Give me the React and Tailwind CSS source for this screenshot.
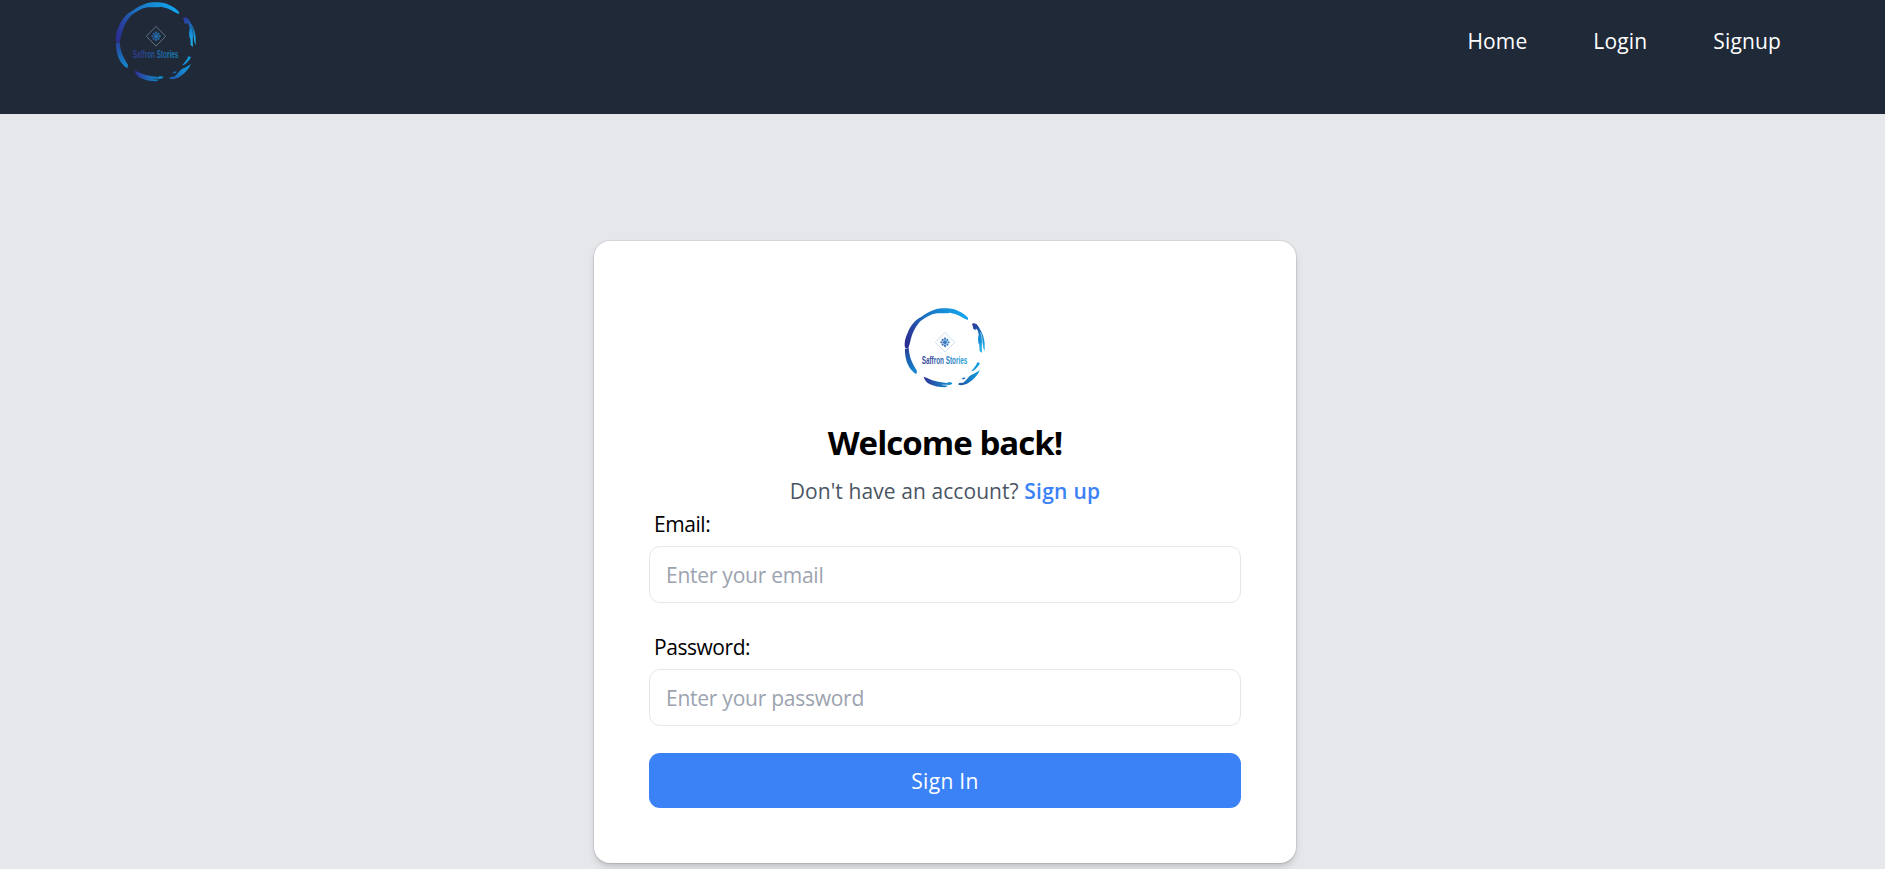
import React from "react";

function Logo({ id, dark }) {
  const g = (n) => `url(#${id}-${n})`;
  return (
    <svg viewBox="45 32 270 255" className="block h-[85px] w-[90px] shrink-0" role="img" aria-label="Saffron Stories">
      <defs>
        <linearGradient id={`${id}-top`} gradientUnits="userSpaceOnUse" x1="62" y1="150" x2="235" y2="60">
          <stop offset="0" stopColor="#2d2c91" />
          <stop offset="0.22" stopColor="#2745a0" />
          <stop offset="0.45" stopColor="#1c6fbd" />
          <stop offset="1" stopColor="#12a2ea" />
        </linearGradient>
        <linearGradient id={`${id}-left`} gradientUnits="userSpaceOnUse" x1="64" y1="158" x2="92" y2="236">
          <stop offset="0" stopColor="#264096" />
          <stop offset="0.5" stopColor="#1b67b5" />
          <stop offset="1" stopColor="#168bd2" />
        </linearGradient>
        <linearGradient id={`${id}-bottom`} gradientUnits="userSpaceOnUse" x1="116" y1="0" x2="200" y2="0">
          <stop offset="0" stopColor="#303099" />
          <stop offset="0.5" stopColor="#1f68b5" />
          <stop offset="1" stopColor="#1191d2" />
        </linearGradient>
        <linearGradient id={`${id}-lower`} gradientUnits="userSpaceOnUse" x1="221" y1="266" x2="285" y2="203">
          <stop offset="0" stopColor="#2357aa" />
          <stop offset="0.5" stopColor="#1489d0" />
          <stop offset="1" stopColor="#12a0dd" />
        </linearGradient>
        <linearGradient id={`${id}-right`} gradientUnits="userSpaceOnUse" x1="262" y1="82" x2="298" y2="165">
          <stop offset="0" stopColor="#2d359b" />
          <stop offset="0.25" stopColor="#2450a8" />
          <stop offset="0.5" stopColor="#1385ce" />
          <stop offset="1" stopColor="#20b0ea" />
        </linearGradient>
        <linearGradient id={`${id}-mark`} gradientUnits="userSpaceOnUse" x1="165" y1="0" x2="195" y2="0">
          <stop offset="0" stopColor="#2c5aa6" />
          <stop offset="1" stopColor="#2585c8" />
        </linearGradient>
      </defs>
      <path fill={g("top")} d="M60 157C57 145 60 127 68 112C77 90 91 74 107 66C121 55 137 47 152 42C165 38 183 39 200 40C221 44 237 55 249 67L249 74C238 71 229 64 218 59C211 55 202 55 195 52C185 56 166 52 148 55C132 59 112 71 102 82C88 98 81 117 77 133C75 144 72 152 70 159Z" />
      <path fill={g("left")} d="M60 160L71 158C72 174 76 190 83 204C87 213 92 220 96 227L94 237C84 231 73 219 68 206C63 194 59 174 60 160Z" />
      <path fill={g("bottom")} d="M116 244C127 248 139 254 151 257C163 261 176 261 189 264L189 268C180 269 174 268 168 269L189 271L181 276C163 276 145 272 133 266C125 261 118 254 116 244Z" />
      <path fill={g("bottom")} d="M187 261L199 261L202 266L190 270Z" />
      <path fill={g("lower")} d="M220 268L222 263L234 262C244 256 248 248 254 242C262 237 268 235 274 231C279 228 282 226 285 223C279 239 264 254 250 263C239 269 229 271 220 268ZM229 251C233 247 239 245 241 247C240 252 234 253 229 251ZM259 227C267 219 273 211 277 201L285 203C283 210 277 214 274 219C269 224 264 229 259 227Z" />
      <path fill={g("right")} d="M261 86C265 81 270 86 275 86C276 91 282 93 284 100C292 112 298 128 299 144L299 168L295 158L293 140L290 157L291 172L284 168L283 149L280 142L279 130L281 118L279 108C276 105 277 98 272 103C267 104 262 99 264 94Z" />
      <path d="M287 112C292 128 293 139 291 152" fill="none" stroke={dark ? "#1f2937" : "#ffffff"} strokeWidth="1.6" />
      <path d="M180 111L209 141L180 170L151 141Z" fill="none" stroke={dark ? "#66778a" : "#c6dcec"} strokeWidth="2.8" />
      <g fill={g("mark")} opacity="0.9">
        <path d="M180 133L188 141L180 149L172 141Z" />
        <circle cx="180" cy="130" r="3.4" />
        <circle cx="180" cy="152" r="3.4" />
        <circle cx="169" cy="141" r="3.4" />
        <circle cx="191" cy="141" r="3.4" />
        <circle cx="173" cy="134" r="3.4" />
        <circle cx="187" cy="134" r="3.4" />
        <circle cx="173" cy="148" r="3.4" />
        <circle cx="187" cy="148" r="3.4" />
      </g>
      <g transform="translate(110 205) scale(1 1.5)">
        <text x="0" y="0" textLength="137" lengthAdjust="spacingAndGlyphs" opacity={dark ? 0.8 : 0.95} className="font-['Liberation_Sans_Narrow','Liberation_Sans',sans-serif] text-[22px] font-bold">
          <tspan fill={dark ? "#31449f" : "#30489c"}>Saff</tspan>
          <tspan fill={dark ? "#285daa" : "#2c62aa"}>ron </tspan>
          <tspan fill={dark ? "#2077bb" : "#2580c2"}>Sto</tspan>
          <tspan fill={dark ? "#1c91d1" : "#2199d6"}>ries</tspan>
        </text>
      </g>
    </svg>
  );
}

function Field({ label, type, placeholder }) {
  return (
    <label className="flex flex-col">
      <span className="pl-[5px] text-[21px] leading-[33px] tracking-[-0.45px] text-black">{label}</span>
      <input
        type={type}
        placeholder={placeholder}
        className="mt-[5px] h-[57px] w-full rounded-[11px] border border-gray-200 bg-white px-4 pt-[2px] text-[21px] tracking-[-0.25px] placeholder:text-[#9ca3af] outline-none"
      />
    </label>
  );
}

export default function App() {
  return (
    <div className="flex h-[869px] flex-col overflow-hidden bg-[#e5e7eb] font-['Open_Sans','Noto_Sans',sans-serif]">
      <header className="flex h-[114px] shrink-0 items-start justify-between bg-[#1f2937] pl-[111px] pr-[104px]">
        <Logo id="nav" dark />
        <nav className="flex gap-[66px] pt-[25px] text-[21px] leading-[33px] tracking-[0.15px] text-white">
          <a href="#home">Home</a>
          <a href="#login">Login</a>
          <a href="#signup">Signup</a>
        </nav>
      </header>
      <main className="flex justify-center pl-[5px] pt-[127px]">
        <section className="flex h-[622px] w-[702px] flex-col rounded-[16px] bg-white px-[55px] pt-[64.67px] shadow-[0_0_0_1px_rgba(0,0,0,0.07),0_5px_8px_-1px_rgba(0,0,0,0.12),0_3px_5px_-2px_rgba(0,0,0,0.12)]">
          <div className="flex justify-center">
            <Logo id="card" />
          </div>
          <h1 className="mt-[29.33px] text-center text-[33px] font-bold leading-[46px] tracking-[-0.95px] text-black">Welcome back!</h1>
          <p className="mt-[9px] text-center text-[21px] leading-[33px] tracking-[0.08px] text-[#4b5563]">
            Don't have an account?{" "}
            <a href="#signup" className="font-semibold tracking-[0.25px] text-[#3b82f6]">Sign up</a>
          </p>
          <form className="flex flex-col">
            <Field label="Email:" type="email" placeholder="Enter your email" />
            <div className="h-[28px]" />
            <Field label="Password:" type="password" placeholder="Enter your password" />
            <button type="button" className="mt-[27px] h-[55px] rounded-[11px] bg-[#3b82f6] pt-[2px] text-[21px] leading-[33px] tracking-[0.3px] text-white">
              Sign In
            </button>
          </form>
        </section>
      </main>
    </div>
  );
}
